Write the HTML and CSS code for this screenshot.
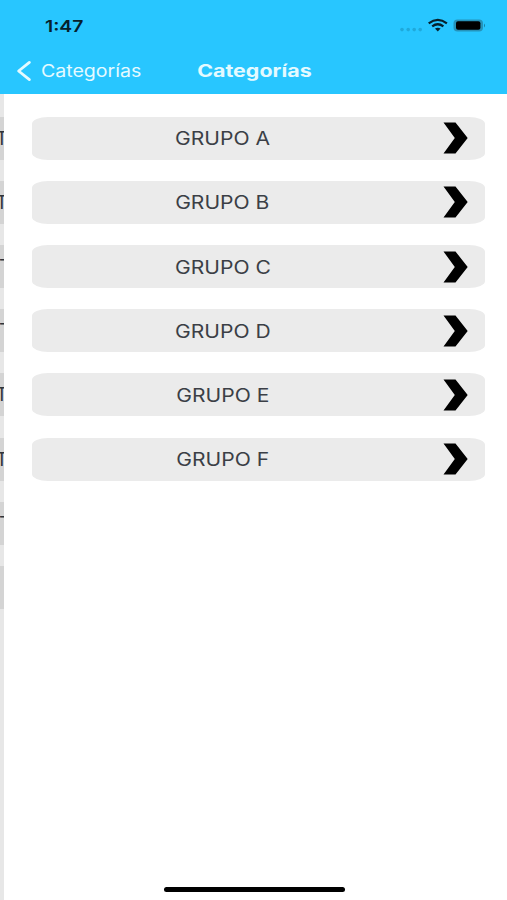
FILE: index.html
```html
<!doctype html>
<html lang="es">
  <head>
    <meta charset="UTF-8" />
    <meta name="viewport" content="width=device-width, initial-scale=1.0" />
    <title>Categorías</title>
    <link rel="stylesheet" href="styles.css">
  </head>
  <body>
    <header class="header">
        <div class="status">
            <span class="time"><span class="wide">1:47</span></span>
            <svg class="status-icons" width="88" height="20" viewBox="0 0 88 20">
                <g fill="#1fa9db">
                    <circle cx="3" cy="13.6" r="1.8" />
                    <circle cx="9.2" cy="13.6" r="1.8" />
                    <circle cx="15.2" cy="13.6" r="1.8" />
                    <circle cx="21.2" cy="13.6" r="1.8" />
                </g>
                <g fill="none" stroke="#06212c" stroke-width="2.2">
                    <path d="M29.7 7.3Q38.8 0.5 47.9 7.3" />
                    <path d="M33.2 10.4Q38.8 6.1 44.4 10.4" />
                </g>
                <path d="M36 12.6Q38.8 10.7 41.6 12.6L38.8 15.4Z" fill="#06212c" />
                <rect x="54.5" y="3.5" width="29.5" height="12" rx="4" fill="#2593bb" />
                <rect x="57" y="5.2" width="24.4" height="8.6" rx="2" fill="#000" />
                <path d="M85 7.5Q87 9.5 85 11.5Z" fill="#187ea3" />
            </svg>
        </div>
        <nav class="nav">
            <a class="back" href="#">
                <svg width="16" height="22" viewBox="0 0 16 22"><path d="M13.4 2.4L2.6 11L13.4 19.6" fill="none" stroke="#e4faff" stroke-width="2.8" stroke-linecap="round" stroke-linejoin="round" /></svg>
                <span class="wide">Categorías</span>
            </a>
            <h1 class="title"><span class="wide">Categorías</span></h1>
        </nav>
    </header>

    <div class="screens">
        <!-- previous screen, still visible at the left edge -->
        <div class="previous">
            <div class="item-prev">T</div>
            <div class="item-prev">T</div>
            <div class="item-prev short">T</div>
            <div class="item-prev short">T</div>
            <div class="item-prev">T</div>
            <div class="item-prev">T</div>
            <div class="item-prev short">T</div>
            <div class="item-prev"></div>
        </div>
        <main class="list">
            <a class="item" href="#"><span class="label"><span class="wide">GRUPO A</span></span><svg class="arrow" viewBox="0 0 26 32"><path d="M0.5 0.5H12.5L24.7 16L12.5 31.5H0.5L11.8 16Z" /></svg></a>
            <a class="item" href="#"><span class="label"><span class="wide">GRUPO B</span></span><svg class="arrow" viewBox="0 0 26 32"><path d="M0.5 0.5H12.5L24.7 16L12.5 31.5H0.5L11.8 16Z" /></svg></a>
            <a class="item" href="#"><span class="label"><span class="wide">GRUPO C</span></span><svg class="arrow" viewBox="0 0 26 32"><path d="M0.5 0.5H12.5L24.7 16L12.5 31.5H0.5L11.8 16Z" /></svg></a>
            <a class="item" href="#"><span class="label"><span class="wide">GRUPO D</span></span><svg class="arrow" viewBox="0 0 26 32"><path d="M0.5 0.5H12.5L24.7 16L12.5 31.5H0.5L11.8 16Z" /></svg></a>
            <a class="item" href="#"><span class="label"><span class="wide">GRUPO E</span></span><svg class="arrow" viewBox="0 0 26 32"><path d="M0.5 0.5H12.5L24.7 16L12.5 31.5H0.5L11.8 16Z" /></svg></a>
            <a class="item" href="#"><span class="label"><span class="wide">GRUPO F</span></span><svg class="arrow" viewBox="0 0 26 32"><path d="M0.5 0.5H12.5L24.7 16L12.5 31.5H0.5L11.8 16Z" /></svg></a>
            <div class="home-bar"></div>
        </main>
    </div>
  </body>
</html>
```

FILE: styles.css
```css
* {
    box-sizing: border-box;
}

body {
    font-family: Inter, "Liberation Sans", sans-serif;
    margin: 0;
    height: 100vh;
    display: flex;
    flex-direction: column;
    overflow: hidden;
    background-color: #fff;
}

a {
    color: inherit;
    text-decoration: none;
}

/* the labels are wider than the font draws them */
.wide {
    display: inline-block;
    transform: scaleX(1.17);
    white-space: nowrap;
}

.header {
    height: 93.5px;
    flex-shrink: 0;
    background-color: #28c6ff;
}

.status {
    display: flex;
    justify-content: space-between;
    height: 50px;
    padding: 16px 20px 0 44.5px;
}

.time {
    font-size: 16px;
    font-weight: 600;
    line-height: 20px;
    color: #06212c;
}

.time .wide {
    transform-origin: left;
    transform: scaleX(1.21);
}

.nav {
    display: flex;
    align-items: center;
    height: 42px;
    color: #e4faff;
    font-size: 17px;
}

.back {
    display: flex;
    align-items: center;
    width: 180px;
    padding-left: 16px;
    gap: 9px;
}

.back .wide {
    transform-origin: left;
    transform: scaleX(1.15);
}

.title {
    margin: 0;
    width: 148px;
    text-align: center;
    font-size: 17px;
    font-weight: 700;
}

.title .wide {
    transform: scaleX(1.26);
}

.screens {
    display: flex;
    flex: 1;
}

.previous {
    width: 4px;
    overflow: hidden;
    background-color: #e7e7e7;
}

.previous,
.list {
    display: flex;
    flex-direction: column;
    gap: 21.2px;
    padding-top: 23.2px;
}

.item-prev {
    height: 43px;
    flex-shrink: 0;
    background-color: #d4d4d4;
    color: #30343a;
    font-size: 18px;
    line-height: 44px;
    text-indent: -4px;
}

.item-prev.short {
    text-indent: -1px;
    font-size: 19px;
    transform: scaleX(1.6);
    transform-origin: left;
}

.list {
    flex: 1;
    padding-left: 28px;
    padding-right: 22px;
}

.item {
    display: flex;
    align-items: center;
    height: 43px;
    flex-shrink: 0;
    border-radius: 16px / 7px;
    background-color: #ebebeb;
}

.label {
    width: 381px;
    padding-top: 1px;
    text-align: center;
    font-size: 18px;
    color: #3b3f46;
}

.arrow {
    width: 26px;
    height: 32px;
    margin-left: 30px;
}

.home-bar {
    width: 181px;
    height: 5px;
    margin: auto 0 8px 131.5px;
    border-radius: 3px;
    background-color: #000;
}
```
